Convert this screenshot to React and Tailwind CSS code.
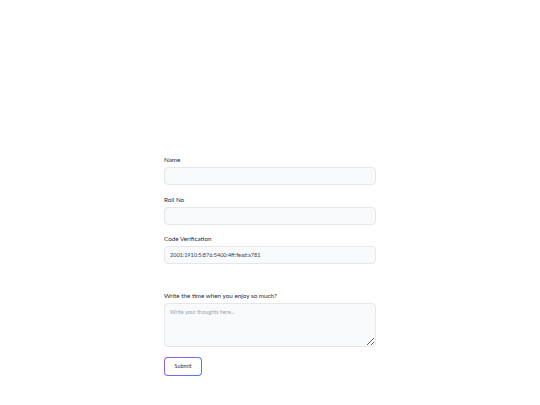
export default function App() {
  return (
    <div
      className="w-[540px] h-[405px] bg-white flex justify-center"
      style={{ fontFamily: "Lato, 'Noto Sans', sans-serif" }}
    >
      <form className="w-[212px] mt-[155px] flex flex-col">
        <label className="text-[6.3px] leading-[9px] text-[#1f2937] mb-[3px]">Name</label>
        <input
          type="text"
          className="h-[18px] rounded-[4px] border border-[#e5e7eb] bg-[#f9fafb] px-[5px] text-[5.5px] outline-none"
        />

        <label className="text-[6.3px] leading-[9px] text-[#1f2937] mt-[10px] mb-[3px]">Roll No</label>
        <input
          type="text"
          className="h-[18px] rounded-[4px] border border-[#e5e7eb] bg-[#f9fafb] px-[5px] text-[5.5px] outline-none"
        />

        <label className="text-[6.3px] leading-[9px] text-[#1f2937] mt-[9px] mb-[3px]">
          Code Verification
        </label>
        <input
          type="text"
          readOnly
          value="2001:1910:5:876:5400:4ff:fead:a781"
          className="h-[18px] rounded-[4px] border border-[#e5e7eb] bg-[#f9fafb] px-[5px] text-[5.5px] text-[#374151] outline-none"
        />

        <label className="text-[6.3px] leading-[9px] text-[#1f2937] mt-[27px] mb-[3px]">
          Write the time when you enjoy so much?
        </label>
        <textarea
          placeholder="Write your thoughts here..."
          className="h-[44px] block rounded-[4px] border border-[#e5e7eb] bg-[#f9fafb] px-[5px] py-[4px] text-[5.5px] leading-[8px] placeholder:text-[#9ca3af] outline-none"
        />

        <div className="mt-[10px] w-[38px] h-[19px] rounded-[4px] p-px flex bg-[linear-gradient(135deg,#a855f7,#3b82f6)]">
          <button
            type="button"
            className="flex-1 flex items-center justify-center rounded-[3px] bg-white text-[5.5px] leading-none text-[#1f2937]"
          >
            Submit
          </button>
        </div>
      </form>
    </div>
  );
}
